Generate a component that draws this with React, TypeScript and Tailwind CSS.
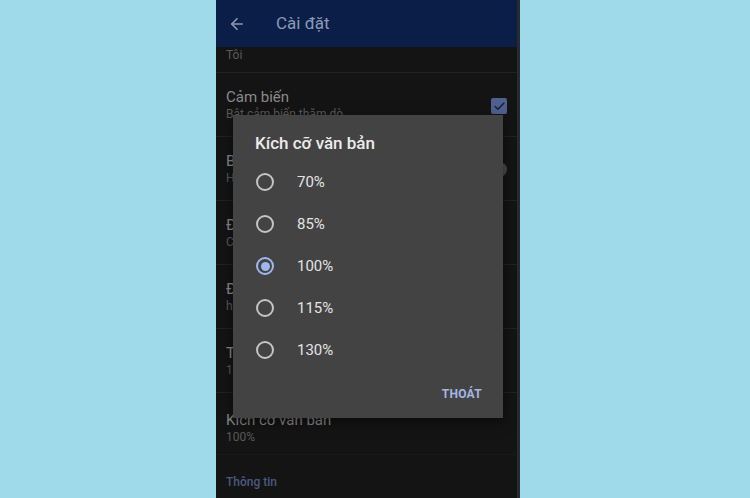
import { ArrowLeft, Check } from 'lucide-react'

const rows = [
  { title: 'Báo thức', sub: 'Hẹn giờ thông báo', toggle: true },
  { title: 'Đơn vị', sub: 'Celsius' },
  { title: 'Định dạng giờ', sub: 'hh:mm' },
  { title: 'Tự động cập nhật', sub: '15 phút' },
]

const options = ['70%', '85%', '100%', '115%', '130%']

function Radio(props: { checked: boolean }) {
  if (props.checked) {
    return (
      <span className="flex h-[18px] w-[18px] shrink-0 items-center justify-center rounded-full border-2 border-[#9fb6ee]">
        <span className="h-[9px] w-[9px] rounded-full bg-[#9fb6ee]" />
      </span>
    )
  }
  return <span className="h-[18px] w-[18px] shrink-0 rounded-full border-2 border-[#c4c4c4]" />
}

function Row(props: { title: string; sub: string; children?: React.ReactNode }) {
  return (
    <div className="flex h-[64px] items-start justify-between border-b border-[#222222] px-[10px] pt-[15px]">
      <div className="flex flex-col">
        <span className="text-[15px] leading-[18px] text-[#8a8a8a]">{props.title}</span>
        <span className="text-[12px] leading-[16px] text-[#5a5a5a]">{props.sub}</span>
      </div>
      {props.children}
    </div>
  )
}

export default function App() {
  return (
    <div
      className="flex h-[498px] w-[750px] bg-[#9fdaea] pl-[216px]"
      style={{ fontFamily: 'Roboto, "Noto Sans", sans-serif' }}
    >
      <div className="relative flex h-[498px] w-[304px] flex-col overflow-hidden border-r-[3px] border-[#262a33] bg-[#141414]">
        <div className="flex h-[47px] shrink-0 items-center gap-[30px] bg-[#0a1e47] px-[12px]">
          <ArrowLeft className="h-[18px] w-[18px] text-[#8e99b6]" strokeWidth={2.2} />
          <span className="text-[17px] text-[#8e99b6]">Cài đặt</span>
        </div>

        <div className="flex h-[26px] shrink-0 overflow-hidden border-b border-[#222222] px-[10px]">
          <span className="text-[12px] leading-[16px] text-[#5a5a5a]">Tôi</span>
        </div>

        <Row title="Cảm biến" sub="Bật cảm biến thăm dò">
          <span className="mt-[10px] flex h-[16px] w-[16px] items-center justify-center rounded-[2px] bg-[#4e6190]">
            <Check className="h-[13px] w-[13px] text-[#17213d]" strokeWidth={3} />
          </span>
        </Row>

        {rows.map((r) => (
          <Row key={r.title} title={r.title} sub={r.sub}>
            {r.toggle && (
              <span className="mt-[10px] h-[15px] w-[30px] rounded-full bg-[#4a4a4a]" />
            )}
          </Row>
        ))}

        <div className="flex h-[62px] flex-col border-b border-[#1a1a1a] px-[10px] pt-[18px]">
          <span className="text-[15px] leading-[18px] text-[#8a8a8a]">Kích cỡ văn bản</span>
          <span className="text-[12px] leading-[16px] text-[#5a5a5a]">100%</span>
        </div>

        <div className="px-[10px] pt-[14px]">
          <span className="text-[12px] font-medium text-[#4a5a80]">Thông tin</span>
        </div>

        <div className="absolute left-[17px] top-[115px] flex h-[303px] w-[270px] flex-col bg-[#434343] pt-[16px] shadow-[0_4px_12px_rgba(0,0,0,0.5)]">
          <div className="h-[24px] pl-[22px] text-[17px] font-medium leading-[24px] text-[#ececec]">
            Kích cỡ văn bản
          </div>
          <div className="mt-[6px] flex flex-col">
            {options.map((o) => (
              <div key={o} className="flex h-[42px] items-center pl-[23px]">
                <Radio checked={o === '100%'} />
                <span className="ml-[23px] text-[15px] text-[#e4e4e4]">{o}</span>
              </div>
            ))}
          </div>
          <div className="mt-[11px] flex h-[24px] items-center justify-end pr-[21px]">
            <span className="text-[12px] font-bold tracking-[0.3px] text-[#a6b6e4]">THOÁT</span>
          </div>
        </div>
      </div>
    </div>
  )
}
